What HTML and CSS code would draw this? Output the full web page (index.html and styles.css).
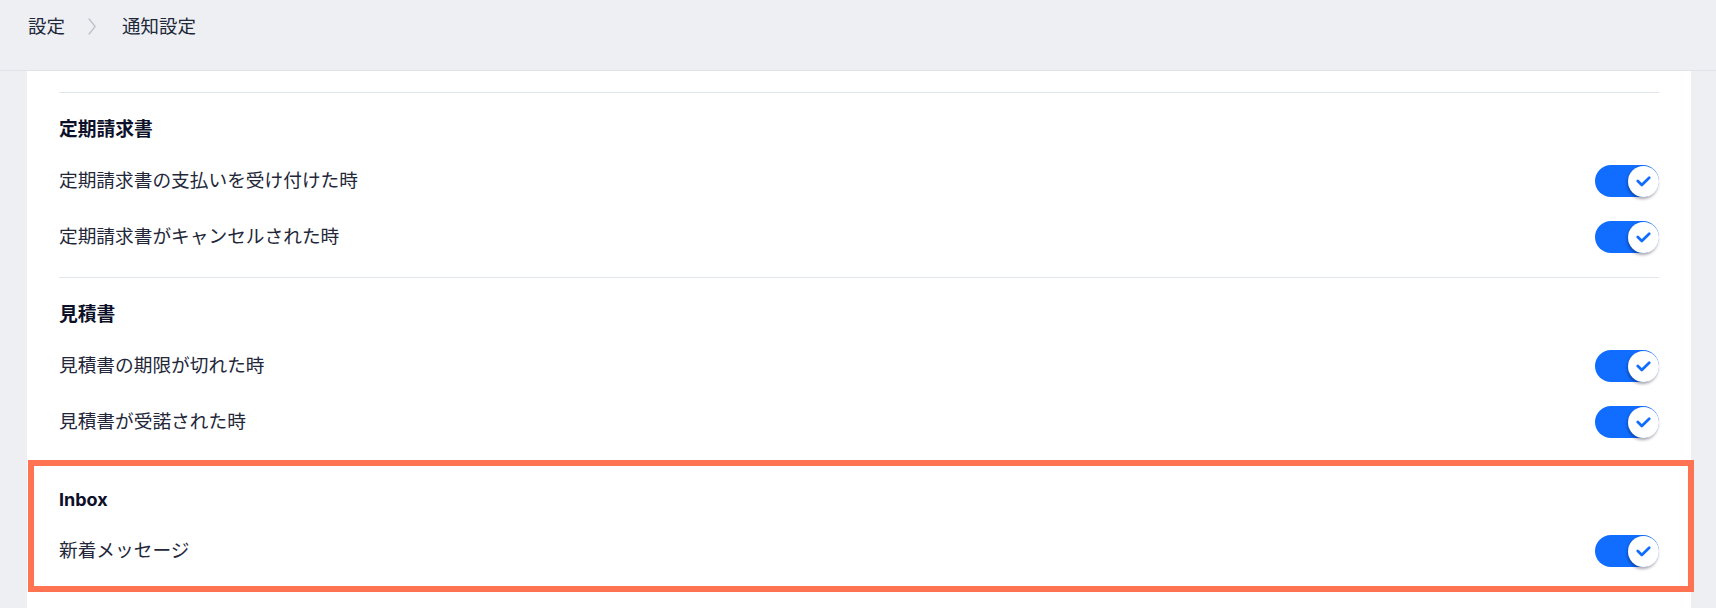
FILE: index.html
```html
<!DOCTYPE html>
<html lang="ja">
<head>
<meta charset="utf-8">
<title>通知設定</title>
<link rel="stylesheet" href="styles.css">
</head>
<body>
<header class="topbar">
  <nav class="crumbs">
    <span class="crumb">設定</span>
    <svg class="chev" width="8" height="17" viewBox="0 0 8 17"><polyline points="0.7,0.5 7.2,8.5 0.7,16.5" fill="none" stroke="#b9bec8" stroke-width="1.2"/></svg>
    <span class="crumb current">通知設定</span>
  </nav>
</header>
<main class="card">
  <section class="group">
    <h3 class="group-title">定期請求書</h3>
    <div class="row"><span class="label">定期請求書の支払いを受け付けた時</span><span class="toggle"><span class="knob"><svg width="15" height="11" viewBox="0 0 15 11"><polyline points="1.8,5 5.8,9 13.2,1.8" fill="none" stroke="#116dff" stroke-width="2.7" stroke-linecap="round" stroke-linejoin="round"/></svg></span></span></div>
    <div class="row"><span class="label">定期請求書がキャンセルされた時</span><span class="toggle"><span class="knob"><svg width="15" height="11" viewBox="0 0 15 11"><polyline points="1.8,5 5.8,9 13.2,1.8" fill="none" stroke="#116dff" stroke-width="2.7" stroke-linecap="round" stroke-linejoin="round"/></svg></span></span></div>
  </section>
  <section class="group">
    <h3 class="group-title">見積書</h3>
    <div class="row"><span class="label">見積書の期限が切れた時</span><span class="toggle"><span class="knob"><svg width="15" height="11" viewBox="0 0 15 11"><polyline points="1.8,5 5.8,9 13.2,1.8" fill="none" stroke="#116dff" stroke-width="2.7" stroke-linecap="round" stroke-linejoin="round"/></svg></span></span></div>
    <div class="row"><span class="label">見積書が受諾された時</span><span class="toggle"><span class="knob"><svg width="15" height="11" viewBox="0 0 15 11"><polyline points="1.8,5 5.8,9 13.2,1.8" fill="none" stroke="#116dff" stroke-width="2.7" stroke-linecap="round" stroke-linejoin="round"/></svg></span></span></div>
  </section>
  <section class="group highlighted">
    <h3 class="group-title latin">Inbox</h3>
    <div class="row"><span class="label">新着メッセージ</span><span class="toggle"><span class="knob"><svg width="15" height="11" viewBox="0 0 15 11"><polyline points="1.8,5 5.8,9 13.2,1.8" fill="none" stroke="#116dff" stroke-width="2.7" stroke-linecap="round" stroke-linejoin="round"/></svg></span></span></div>
    <div class="highlight"></div>
  </section>
  <section class="group tail"></section>
</main>
</body>
</html>
```
FILE: styles.css
```css
* { box-sizing: border-box; }
html, body { margin: 0; padding: 0; }
body {
  background: #eeeff3;
  font-family: "Inter", "Noto Sans CJK JP", sans-serif;
  color: #24283a;
  overflow: hidden;
  height: 608px;
}
.topbar {
  height: 71px;
  border-bottom: 1px solid #dfe3ea;
  padding: 14px 0 0 28px;
}
.crumbs {
  display: flex;
  align-items: center;
  height: 24px;
  font-size: 18.5px;
  line-height: 24px;
  color: #20283a;
}
.chev { margin: 0 26px 0 23px; display: block; }
.card {
  margin: 0 25px 0 27px;
  background: #ffffff;
  padding: 21px 32px 0 32px;
  height: 537px;
}
.group {
  border-top: 1px solid #e1e5ec;
  padding: 17px 0 12px 0;
}
.group.tail { padding: 0; }
.group.highlighted { position: relative; }
.group-title {
  margin: 0 0 3px 0;
  height: 40px;
  line-height: 40px;
  font-size: 18.8px;
  font-weight: 700;
  color: #0c1029;
}
.group-title.latin { font-size: 18px; }
.row {
  height: 56px;
  display: flex;
  align-items: center;
  justify-content: space-between;
}
.label {
  font-size: 18.7px;
  line-height: 24px;
  color: #232739;
}
.toggle {
  position: relative;
  width: 64px;
  height: 32px;
  border-radius: 16px;
  background: #116dff;
  display: block;
}
.knob {
  position: absolute;
  right: 0;
  top: 1px;
  width: 31px;
  height: 31px;
  border-radius: 50%;
  background: #ffffff;
  box-shadow: -1px 2px 3px rgba(0, 6, 36, 0.35);
  display: flex;
  align-items: center;
  justify-content: center;
}
.knob svg { display: block; }
.highlight {
  position: absolute;
  left: -31px;
  right: -35px;
  top: -3px;
  bottom: -1px;
  border: 6px solid #ff7252;
  pointer-events: none;
}
```
